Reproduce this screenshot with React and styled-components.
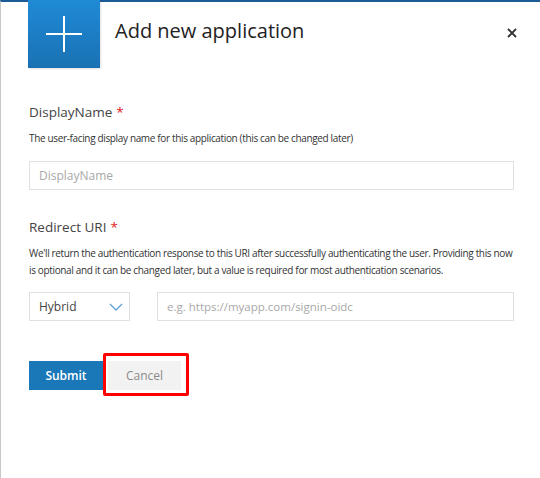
import React from "react";
import styled, { createGlobalStyle } from "styled-components";

const GlobalStyle = createGlobalStyle`
  html, body {
    margin: 0;
    padding: 0;
    background: #fff;
  }
  body {
    font-family: "Open Sans", "Noto Sans", sans-serif;
    color: #333;
  }
`;

const Blade = styled.div`
  width: 540px;
  height: 478px;
  box-sizing: border-box;
  border-top: 2px solid #1b5c96;
  border-left: 1px solid #c8c8c8;
  background: #fff;
`;

const Header = styled.div`
  display: flex;
  align-items: flex-start;
  padding-left: 27px;
  height: 66px;
  margin-top: -2px;
`;

const Tile = styled.div`
  width: 72px;
  height: 68px;
  display: flex;
  align-items: center;
  justify-content: center;
  background: linear-gradient(180deg, #1f8ad6 0%, #1a71b3 100%);
  box-shadow: 1px 1px 2px rgba(0, 0, 0, 0.12);
  flex-shrink: 0;
`;

const Title = styled.h1`
  margin: 0 0 0 15px;
  padding-top: 17px;
  font-size: 20px;
  font-weight: 400;
  color: #222;
  flex: 1;
`;

const Close = styled.button`
  border: none;
  background: none;
  padding: 0;
  margin: 26px 21px 0 0;
  width: 14px;
  height: 14px;
  display: flex;
  align-items: center;
  justify-content: center;
  cursor: pointer;
`;

const Form = styled.div`
  padding: 37px 26px 0 28px;
`;

const Field = styled.div`
  margin-bottom: ${(p) => p.$gap || 0}px;
`;

const Label = styled.div`
  font-size: 13.5px;
  color: #444;
  line-height: 18px;
`;

const Star = styled.span`
  color: #e02020;
  margin-left: 4px;
`;

const Help = styled.p`
  margin: 9px 0 0;
  font-size: 10px;
  letter-spacing: -0.35px;
  line-height: 17px;
  color: #333;
`;

const Input = styled.input`
  display: block;
  box-sizing: border-box;
  width: ${(p) => (p.$flex ? "auto" : "100%")};
  flex: ${(p) => (p.$flex ? 1 : "none")};
  min-width: 0;
  height: 29px;
  margin-top: ${(p) => p.$top || 0}px;
  border: 1px solid #e1e1e1;
  padding: 0 9px;
  font-family: inherit;
  font-size: ${(p) => p.$size || 12}px;
  color: #333;
  outline: none;
  &::placeholder {
    color: #a8a8a8;
  }
`;

const Row = styled.div`
  display: flex;
  gap: 27px;
  margin-top: ${(p) => p.$top || 0}px;
`;

const Select = styled.div`
  box-sizing: border-box;
  width: 101px;
  height: 29px;
  border: 1px solid #e1e1e1;
  display: flex;
  align-items: center;
  justify-content: space-between;
  padding: 0 6px 0 9px;
  font-size: 12px;
  color: #444;
`;

const Buttons = styled.div`
  display: flex;
  align-items: center;
  margin-top: 40px;
`;

const Button = styled.button`
  width: ${(p) => p.$w}px;
  height: 29px;
  border: none;
  padding: 0;
  font-family: inherit;
  font-size: 12px;
  font-weight: ${(p) => (p.$primary ? 600 : 400)};
  color: ${(p) => (p.$primary ? "#fff" : "#8a8a8a")};
  background: ${(p) => (p.$primary ? "#1a77b8" : "#f2f2f2")};
  cursor: pointer;
`;

const Highlight = styled.div`
  position: relative;
  margin-left: 5px;
  display: flex;
  &::after {
    content: "";
    position: absolute;
    top: -8px;
    left: -5px;
    right: -8px;
    bottom: -6px;
    border: 3px solid #f00;
    border-radius: 2px;
    pointer-events: none;
  }
`;

export default function App() {
  return (
    <>
      <GlobalStyle />
      <Blade>
        <Header>
          <Tile>
            <svg width="36" height="36" viewBox="0 0 36 36">
              <path d="M18 0v36M0 18h36" stroke="#fff" strokeWidth="2" />
            </svg>
          </Tile>
          <Title>Add new application</Title>
          <Close aria-label="Close">
            <svg width="10" height="10" viewBox="0 0 10 10">
              <path d="M1 1l8 8M9 1l-8 8" stroke="#333" strokeWidth="1.8" />
            </svg>
          </Close>
        </Header>
        <Form>
          <Field $gap={28}>
            <Label>
              DisplayName<Star>*</Star>
            </Label>
            <Help>
              The user-facing display name for this application (this can be
              changed later)
            </Help>
            <Input placeholder="DisplayName" $top={14} />
          </Field>
          <Field>
            <Label>
              Redirect URI<Star>*</Star>
            </Label>
            <Help>
              We'll return the authentication response to this URI after
              successfully authenticating the user. Providing this now is
              optional and it can be changed later, but a value is required for
              most authentication scenarios.
            </Help>
            <Row $top={13}>
              <Select>
                Hybrid
                <svg width="14" height="8" viewBox="0 0 14 8">
                  <path d="M1 1l6 6 6-6" stroke="#5ba3d4" strokeWidth="1.3" fill="none" />
                </svg>
              </Select>
              <Input $flex $size={11.5} placeholder="e.g. https://myapp.com/signin-oidc" />
            </Row>
          </Field>
          <Buttons>
            <Button $primary $w={74}>
              Submit
            </Button>
            <Highlight>
              <Button $w={73}>Cancel</Button>
            </Highlight>
          </Buttons>
        </Form>
      </Blade>
    </>
  );
}
